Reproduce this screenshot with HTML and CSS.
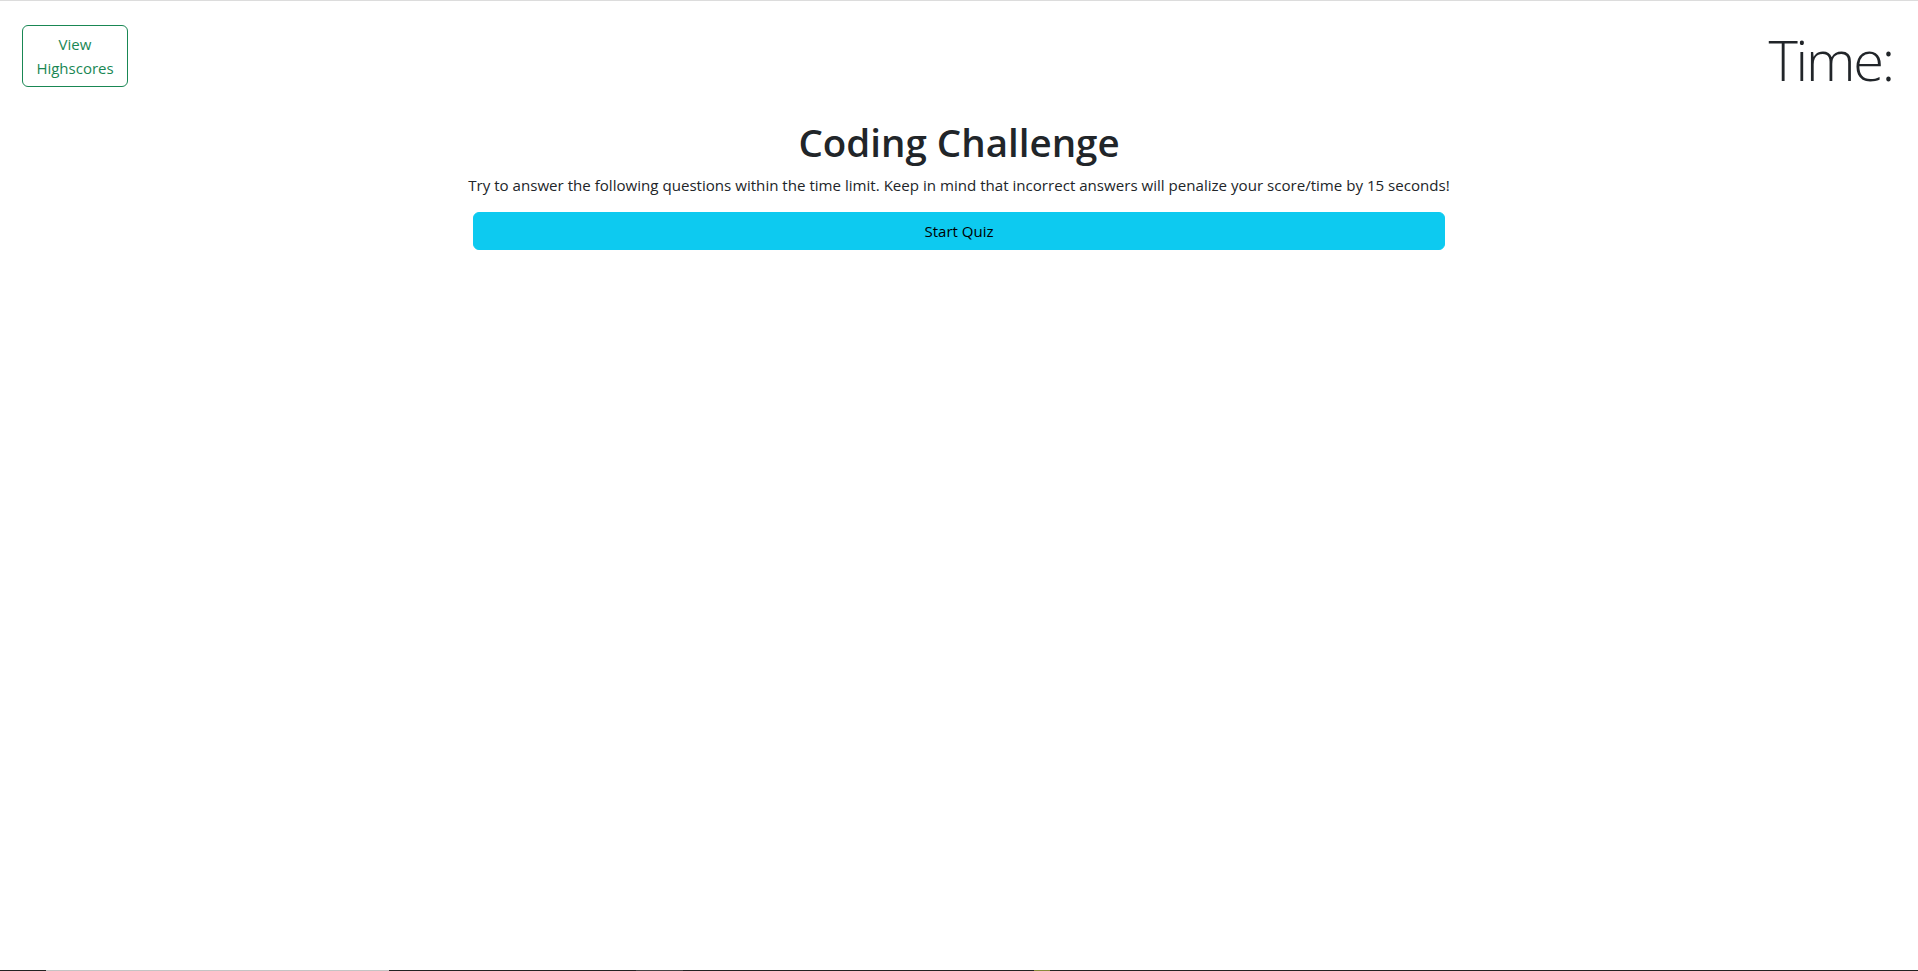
FILE: index.html
```html
<!DOCTYPE html>
<html lang="en">
<head>
<meta charset="utf-8">
<title>Coding Challenge</title>
<link rel="stylesheet" href="styles.css">
</head>
<body>
<div class="page">
  <header class="topbar">
    <button class="btn-outline">View Highscores</button>
    <div class="timer">Time:</div>
  </header>
  <main class="intro">
    <h1 class="title">Coding Challenge</h1>
    <p class="lead">Try to answer the following questions within the time limit. Keep in mind that incorrect answers will penalize your score/time by 15 seconds!</p>
    <button class="btn-start">Start Quiz</button>
  </main>
  <div class="taskline"></div>
</div>
</body>
</html>
```

FILE: styles.css
```css
* { box-sizing: border-box; }
html, body { margin: 0; padding: 0; }
body {
  font-family: "Open Sans", "Noto Sans", sans-serif;
  font-size: 16px;
  line-height: 1.5;
  color: #212529;
  background: #fff;
}
.page {
  min-height: 971px;
  display: flex;
  flex-direction: column;
  border-top: 1px solid #dcdcdc;
}
.topbar {
  display: flex;
  justify-content: space-between;
  align-items: flex-start;
  padding: 23px 25px 0 22px;
}
.btn-outline {
  margin-top: 1px;
  width: 106px;
  padding: 6px 10px;
  font: inherit;
  font-size: 15px;
  line-height: 24px;
  color: #198754;
  background: transparent;
  border: 1px solid #198754;
  border-radius: 6px;
  text-align: center;
}
.timer {
  padding-top: 2px;
  font-size: 56px;
  font-weight: 300;
  line-height: 1.2;
  letter-spacing: -2.2px;
}
.intro {
  flex: 1;
  display: flex;
  flex-direction: column;
  align-items: center;
  padding-top: 25px;
}
.title {
  margin: 0 0 8px;
  font-size: 38.5px;
  font-weight: 600;
  line-height: 48px;
}
.lead {
  margin: 0 0 15px;
  font-size: 15.1px;
  text-align: center;
  white-space: nowrap;
}
.btn-start {
  width: 972px;
  height: 38px;
  padding: 6px 12px;
  font: inherit;
  font-size: 15px;
  line-height: 24px;
  color: #000;
  background: #0dcaf0;
  border: 1px solid #0dcaf0;
  border-radius: 6px;
}
.taskline {
  height: 1px;
  background: linear-gradient(to right, #222 0 46px, #c4c4c4 46px 389px, #222 389px 636px, #444 636px 683px, #222 683px 1034px, #8a8a3a 1034px 1050px, #222 1050px);
}
```
